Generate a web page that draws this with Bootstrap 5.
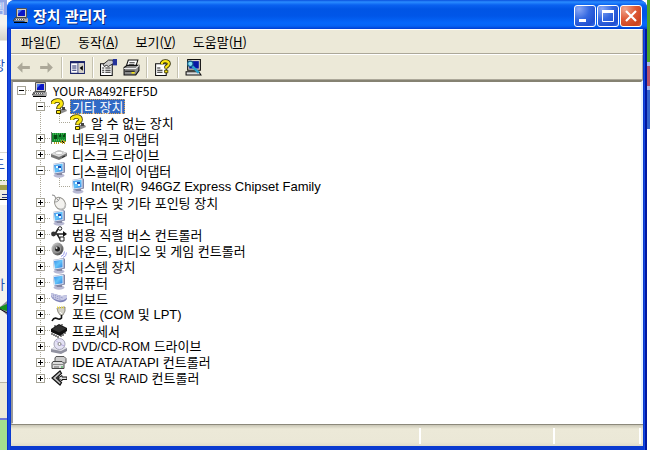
<!DOCTYPE html>
<html lang="ko">
<head>
<meta charset="utf-8">
<meta name="viewport" content="width=device-width, initial-scale=1">
<title>장치 관리자</title>
<link rel="stylesheet" href="https://cdn.jsdelivr.net/npm/bootstrap@5.3.0/dist/css/bootstrap.min.css">
<style>
  :root { --face: #ece9d8; --shade: #aca899; --dots: repeating-linear-gradient(#aca899 0 1px, transparent 1px 2px); --dots-x: repeating-linear-gradient(90deg, #aca899 0 1px, transparent 1px 2px); }
  body { font-family: "Noto Sans CJK KR", sans-serif; font-size: 13px; line-height: 16px; color: #000; background: #fff; }
  svg { display: block; flex: none; }
  .ico { width: 16px; height: 16px; }
  .latin { font-family: "Liberation Sans", sans-serif; font-size: 12px; }
  .model { font-family: "Liberation Sans", sans-serif; }
  .host { font-size: 12px; }

  .behind-left { width: 7px; background: linear-gradient(#8fa5e6 0 15px, #f4f3ee 15px 24px, #d5d3c9 40px, #fff 41px 152px, #d9d8d0 152px 153px, #fff 153px 205px, #f4f3ee 205px 382px, #b9b5a5 382px 383px, #ece9d8 383px 418px, #6d78d6 418px 420px, #a5e08e 420px 100%); color: #2150b4; }
  .peek { margin-left: -7px; height: 16px; width: 14px; }
  .peek-title { color: #dfe6fb; }
  .peek-a { margin-top: 41px; }
  .peek-b { margin-top: 83px; }
  .peek-c { margin-top: 76px; }
  .behind-right { width: 3px; background: linear-gradient(#4aa32a 0 62px, #a9b7ea 62px 66px, #b5526a 66px 86px, #a9b7ea 86px 90px, #3464cc 90px 129px, #fff 129px); }

  .frame { background: linear-gradient(90deg, #0831c9 0 1px, #1448e0 1px 3px, #0a3ad0 3px calc(100% - 3px), #1448e0 calc(100% - 3px) calc(100% - 2px), #0018a0 calc(100% - 2px)); padding: 0 4px 4px; border-radius: 8px 8px 0 0; }
  .titlebar { height: 29px; margin: 0 -4px; padding: 2px 5px 0 6px; border-radius: 8px 8px 0 0; background: linear-gradient(#0a50dd 0, #2a8cff 2px, #0a62f0 5px, #0055e5 9px, #0056e8 16px, #0567fb 23px, #0562f4 26px, #003dd0 29px); }
  .titlebar h1 { font-size: 15px; line-height: 20px; font-weight: 700; color: #fff; text-shadow: 1px 1px 0 #0a2a80; }
  .caps { gap: 1px; }
  .cap { width: 22px; height: 22px; border: 1px solid #fff; border-radius: 3px; padding: 0; background: radial-gradient(circle at 20% 15%, #8aa8f5, #3468e0 45%, #1f4fd0 80%, #3a70ec); }
  .cap-close { background: radial-gradient(circle at 20% 15%, #f0a58d, #df5a36 45%, #cc4320 80%, #d96040); }

  .client { background: var(--face); }
  .menubar { height: 25px; padding: 0 2px; gap: 1px; border-top: 1px solid #fff; border-bottom: 1px solid var(--shade); border-right: 1px solid var(--shade); }
  .menubar button { border: 0; background: none; padding: 0 8px; color: #000; }
  .toolbar { height: 26px; border-top: 1px solid #fff; border-bottom: 1px solid var(--shade); border-right: 1px solid var(--shade); padding-left: 1px; }
  .tool { border: 0; background: none; padding: 0; width: 23px; height: 22px; display: grid; place-items: center; }
  .tool svg { width: 17px; height: 17px; }
  .split { width: 2px; height: 21px; margin: 0 3px; background: linear-gradient(90deg, #c5c2b0 50%, #fff 50%); }
  .flip { transform: scaleX(-1); }

  .pane { border: solid; border-width: 2px 2px 1px 2px; border-color: #858272 #e4f2ff #fff #9a9a9a; background: #fff; padding: 0 0 0 4px; }
  .tree ul { list-style: none; margin: 0; padding: 0; }
  .tree > ul ul { margin-left: 19px; background: var(--dots) 4px 0 / 1px calc(100% - 8px) no-repeat; }
  .node { height: 16px; display: flex; align-items: center; white-space: pre; }
  .twist { width: 9px; height: 9px; padding: 0; border: 1px solid #a5a396; background: linear-gradient(#000, #000) center / 5px 1px no-repeat, #fff; flex: none; }
  .twist[aria-expanded="false"] { background: linear-gradient(#000, #000) center / 5px 1px no-repeat, linear-gradient(#000, #000) center / 1px 5px no-repeat, #fff; }
  .stem { width: 6px; height: 1px; background: var(--dots-x); }
  .stem-leaf { width: 11px; margin-left: 4px; }
  .label { margin-left: 3px; padding: 0 2px; line-height: 15px; }
  .label.chosen { background: #316ac5; color: #fff; outline: 1px dotted #e0a050; outline-offset: -1px; }

  .statusbar { height: 22px; border-top: 1px solid #8c897b; background: linear-gradient(#c9c6b6 0, #ece9d8 4px, #ebe8d7 17px, #dfdccb); padding: 3px 2px 2px; }
  .cell { border-right: 2px solid; border-image: linear-gradient(90deg, #bcb9a8 50%, #fff 50%) 2; }
  .cell-a { flex: 411; } .cell-b { flex: 133; } .cell-c { flex: 85; }
</style>
<script src="https://cdn.jsdelivr.net/npm/bootstrap@5.3.0/dist/js/bootstrap.bundle.min.js"></script>
</head>
<body class="d-flex vh-100 overflow-hidden m-0">

<svg width="0" height="0" class="position-absolute" aria-hidden="true">
  <defs>
    <linearGradient id="gScreen" x2="1" y2="1"><stop stop-color="#3a8ee8"/><stop offset=".5" stop-color="#63c4fa"/><stop offset="1" stop-color="#2b7fe0"/></linearGradient>
    <linearGradient id="gBall" x2="1" y2="1"><stop stop-color="#ddd"/><stop offset="1" stop-color="#333"/></linearGradient>
  </defs>
  <symbol id="pc" viewBox="0 0 16 16">
    <path d="M3.500.5h10v9h-10z" fill="#d4d0c8" stroke="#555"/><path d="M5 2h7v6H5z" fill="#0a16c8"/><path d="M5 2h4L5 6z" fill="#4a78f0"/>
    <path d="M2 10h11l-1 3H.5z" fill="#eee" stroke="#333"/><path d="M2 11.500h9" stroke="#555" stroke-dasharray="1 1"/>
    <path d="M11 11l4-1v4l-3 1z" fill="#aaa"/><path d="M1 14.500h13" stroke="#000"/>
  </symbol>
  <symbol id="unknown" viewBox="0 0 16 16">
    <path d="M9 11h6l1 2-7 3-2-2z" fill="#8c8c8c"/><path d="M11 9h3v3h-3z" fill="#444"/>
    <path d="M2 6V4.500Q3.500 2.500 6.500 2.500q4 0 4 3.200 0 1.500-1.500 2.300T7.500 11" fill="none" stroke="#3a3500" stroke-width="4.600"/>
    <path d="M2 6V4.500Q3.500 2.500 6.500 2.500q4 0 4 3.200 0 1.500-1.500 2.300T7.500 10.500" fill="none" stroke="#fbe612" stroke-width="3"/>
    <path d="M5.500 12.500h4v3h-4z" fill="#fbe612" stroke="#3a3500"/>
  </symbol>
  <symbol id="net" viewBox="0 0 16 16">
    <path d="M0 3h15v9H0z" fill="#158a30"/><path d="M.5 2v12" stroke="#777"/><path d="M3 5h3v4H3zM8 4h2v3H8zM12 4h2v3h-2z" fill="#064a12"/><path d="M2 4h12M3 10h11" stroke="#6bdc72" stroke-dasharray="1 1"/><path d="M3 13h6M10 11h4v2h-4z" stroke="#b69d22" stroke-width="2" stroke-dasharray="1 1"/>
  </symbol>
  <symbol id="disk" viewBox="0 0 16 16">
    <path d="M0 8l8-4 8 3v3l-8 4-8-3z" fill="#777"/><path d="M0 8l8-4 8 3-8 4z" fill="#dcdcdc"/><ellipse cx="8" cy="7" rx="4" ry="1.600" fill="#fff" stroke="#aaa" stroke-width=".6"/><path d="M11 11.500l3-1.500" stroke="#222"/>
  </symbol>
  <symbol id="display" viewBox="0 0 16 16">
    <ellipse cx="8" cy="13.500" rx="5.500" ry="2.200" fill="#b7b8d2"/><path d="M6 10h5v3H6z" fill="#85879f"/>
    <path d="M2 2l10.500-2L14 1v9.500L6 12.500l-3-1z" fill="#8187a8"/><path d="M2 2l10.500-1.500v9.500L3 11.500z" fill="#dfe7f5"/><path d="M3 3l8.500-1.300V9.300L4 10.500z" fill="url(#gScreen)"/>
  </symbol>
  <symbol id="adapter" viewBox="0 0 16 16">
    <use href="#display"/><path d="M5 4h2v2H5zM8 6h2v2H8z" fill="#e8fbff"/><path d="M7 4h3v2H7z" fill="#1b4cb4"/>
  </symbol>
  <symbol id="mouse" viewBox="0 0 16 16">
    <path d="M1 1q3-1 4 4" fill="none" stroke="#888"/><ellipse cx="9" cy="9.500" rx="5" ry="6.500" transform="rotate(-32 9 9.500)" fill="#f3f2ef" stroke="#97958f"/><path d="M4 8q4 0 5-5M6 5l2 2" fill="none" stroke="#999"/><path d="M8 15q7 1 6.500-5" fill="none" stroke="#bbb" stroke-width="1.500"/>
  </symbol>
  <symbol id="usb" viewBox="0 0 16 16">
    <path d="M1 8h12M4 8l3-5h3M6 8l3 5h2" fill="none" stroke="#222" stroke-width="1.600"/><circle cx="2.500" cy="8" r="2.400" fill="#333"/><path d="M12 5l4 3-4 3z" fill="#111"/><circle cx="9" cy="2.500" r="1.800" fill="#fff" stroke="#222"/><path d="M9 11h4v4H9z" fill="#fff" stroke="#222"/>
  </symbol>
  <symbol id="sound" viewBox="0 0 16 16">
    <ellipse cx="6.500" cy="7" rx="6" ry="6.500" fill="url(#gBall)"/><circle cx="6" cy="7" r="4" fill="#999"/><circle cx="6.500" cy="7" r="2.500" fill="#222"/><circle cx="5.500" cy="6" r="1" fill="#ddd"/><path d="M10 14.500q3.500-1 3.500-5M12 15.500q3.500-1 3.500-5" fill="none" stroke="#9da0ee"/>
  </symbol>
  <symbol id="keyboard" viewBox="0 0 16 16">
    <path d="M0 3l11 3 5-1v4q-3 4-8 3Q1 10 0 6z" fill="#7f83b8"/><path d="M0 3l10 3 6-1v3q-4 3-8 2.500Q1 9 0 5z" fill="#c8cae6"/><path d="M2 5l10 3M2 7l8 2.500" stroke="#8a8ec0" stroke-dasharray="1 1"/>
  </symbol>
  <symbol id="port" viewBox="0 0 16 16">
    <path d="M6 2l8-1v4l-2 4H9L7 6z" fill="#d2d0c6" stroke="#77756b" stroke-width=".8"/><path d="M6 1.500h8" stroke="#eedc4a" stroke-width="2" stroke-dasharray="1 1"/><path d="M10.500 9v3Q9 14 6 12.500T1 15" fill="none" stroke="#111" stroke-width="1.600"/><path d="M9 6l2 2" stroke="#fff"/>
  </symbol>
  <symbol id="cpu" viewBox="0 0 16 16">
    <path d="M0 7l8-5 8 4v3l-7 5-9-4z" fill="#111"/><path d="M1 7l7-4 7 3.500-7 4z" fill="#303030"/><path d="M1 11v2M3 12v2M5 13v2M7 14v2M10 13v2M12 12v2M14 10v2M4 5V3M11 3.500V2" stroke="#111"/>
  </symbol>
  <symbol id="dvd" viewBox="0 0 16 16">
    <path d="M0 11l5-3 11 2v3l-6 3-10-2z" fill="#9192a0"/><path d="M0 11l5-3 11 2-6 3z" fill="#e4e4ec"/><circle cx="8.500" cy="6" r="5.500" fill="#e4e2f5" stroke="#a6a6b8"/><path d="M8.500 6L5 2.500M8.500 6l5 2" stroke="#b7abdf"/><circle cx="8.500" cy="6" r="1.500" fill="#fff" stroke="#888"/>
  </symbol>
  <symbol id="ide" viewBox="0 0 16 16">
    <path d="M5 2.500h8l2 2V9H4V4z" fill="#ccc" stroke="#555"/><path d="M2 7.500h9l2 2v5H1V9z" fill="#dcdcdc" stroke="#444"/><path d="M2 10.500h10" stroke="#888"/><path d="M3 13h5" stroke="#666"/><path d="M10 13h2" stroke="#1da32e"/>
  </symbol>
  <symbol id="scsi" viewBox="0 0 16 16">
    <path d="M9 1L1 8l8 7 1.500-2.500L5.500 8l5-4.500z" fill="#bbb" stroke="#111" stroke-width="1.200"/><path d="M7 8l4-2.500V7h5v2.500h-5V11z" fill="#ddd" stroke="#111"/>
  </symbol>
  <symbol id="arrow" viewBox="0 0 16 16"><path d="M2 8l5-5v3.500h7v3H7V13z" fill="#aca899"/></symbol>
  <symbol id="panel" viewBox="0 0 16 16">
    <path d="M1.500 2.500h13v11h-13z" fill="#fff" stroke="#1a2368"/><path d="M1 3h14" stroke="#1a2368" stroke-width="2"/><path d="M8.500 4v10" stroke="#1a2368"/><path d="M3 6.500h4M3 8.500h4M3 10.500h4" stroke="#1a2368"/><path d="M9 4h5v9H9z" fill="#d4d0c8"/><path d="M13 6v5l-3-2.500z" fill="#000"/>
  </symbol>
  <symbol id="props" viewBox="0 0 16 16">
    <path d="M.5 4.500h11v11H.5z" fill="#fff" stroke="#111"/><path d="M2 8.500h2M5 8.500h5M2 10.500h2M5 10.500h5M2 12.500h2M5 12.500h5" stroke="#222"/><path d="M3 5l5-4h4l1 3-5 3-2-1-2 1z" fill="#ccc" stroke="#111" stroke-width=".8"/><path d="M12 0h4v6h-4z" fill="#25339a"/>
  </symbol>
  <symbol id="printer" viewBox="0 0 16 16">
    <path d="M5 1h9l-2 6H3z" fill="#fff" stroke="#111"/><path d="M6 3.500h5M5.500 5.500h5" stroke="#333"/><path d="M1 8l3-2h11v5l-3 4H1z" fill="#8b8b8b" stroke="#111"/><path d="M1 9h11l3-3" fill="none" stroke="#eee"/><path d="M2 11.500h9" stroke="#111"/><path d="M8 13h3" stroke="#f4e413" stroke-width="1.500"/>
  </symbol>
  <symbol id="help" viewBox="0 0 16 16">
    <path d="M1.500 4.500h10v11h-10z" fill="#fff" stroke="#111"/><path d="M3 8.500h3M3 10.500h5M3 12.500h5" stroke="#222"/><path d="M7.500 5V3.500q1-1.500 3-1.500 3.500 0 3.500 2.500Q14 6 11.500 7.500V9" fill="none" stroke="#332f00" stroke-width="3.600"/><path d="M7.500 5V3.500q1-1.500 3-1.500 3.500 0 3.500 2.500Q14 6 11.500 7.500V9" fill="none" stroke="#fbe612" stroke-width="2"/><path d="M10 10.500h3v2.500h-3z" fill="#fbe612" stroke="#332f00" stroke-width=".8"/>
  </symbol>
  <symbol id="scan" viewBox="0 0 16 16">
    <path d="M2.500.5h12v10h-12z" fill="#d4d0c8" stroke="#111"/><path d="M4 2h9v7H4z" fill="#0716a5"/><path d="M1 12h12l2 3H1z" fill="#ddd" stroke="#111"/><circle cx="5" cy="4.500" r="2.500" fill="#86dff5" stroke="#16608a"/><path d="M7 7l6 6" stroke="#2b9fc9" stroke-width="2.400"/>
  </symbol>
</svg>

<aside class="behind-left flex-shrink-0 overflow-hidden" aria-hidden="true">
  <div class="peek peek-title">템</div>
  <div class="peek peek-a">장</div>
  <div class="peek peek-b">드</div>
  <svg width="7" height="20" viewBox="0 0 7 20" class="mt-2"><path d="M0 0h7v20H0z" fill="#eeeade"/><path d="M0 .5h7" stroke="#6f9a54" stroke-dasharray="2 1"/><path d="M0 5h7v5H0z" fill="#a2a04a"/><path d="M2 14.500h5M2 17.500h5" stroke="#22327a"/><path d="M0 20h7" stroke="#000" stroke-width="2"/></svg>
  <div class="peek peek-c">가</div>
  <svg width="7" height="18" viewBox="0 0 7 18" class="mt-2"><path d="M0 7l7-6v14L0 9z" fill="#8c8c9a"/><path d="M0 7l7-3v7L0 9z" fill="#15901f"/><path d="M0 9l7 4" stroke="#111"/></svg>
</aside>

<main class="frame flex-grow-1 d-flex flex-column">
  <header class="titlebar d-flex align-items-center">
    <svg class="ico me-1"><use href="#pc"/></svg>
    <h1 class="m-0 flex-grow-1">장치 관리자</h1>
    <div class="caps d-flex">
      <button class="cap" aria-label="최소화"><svg width="20" height="20"><path d="M4 13h7v3H4z" fill="#fff"/></svg></button>
      <button class="cap" aria-label="최대화"><svg width="20" height="20"><path d="M4.500 5v10.500h11V5" fill="none" stroke="#fff"/><path d="M4 5.500h12" stroke="#fff" stroke-width="3"/></svg></button>
      <button class="cap cap-close" aria-label="닫기"><svg width="20" height="20"><path d="M5 5l10 10M15 5L5 15" stroke="#fff" stroke-width="2.200"/></svg></button>
    </div>
  </header>

  <div class="client flex-grow-1 d-flex flex-column">
    <nav class="menubar d-flex align-items-center" aria-label="메뉴">
      <button>파일(<u>F</u>)</button><button>동작(<u>A</u>)</button><button>보기(<u>V</u>)</button><button>도움말(<u>H</u>)</button>
    </nav>
    <div class="toolbar d-flex align-items-center" role="toolbar" aria-label="도구">
      <button class="tool" disabled aria-label="뒤로"><svg><use href="#arrow"/></svg></button>
      <button class="tool" disabled aria-label="앞으로"><svg class="flip"><use href="#arrow"/></svg></button>
      <span class="split"></span>
      <button class="tool" aria-label="콘솔 트리"><svg><use href="#panel"/></svg></button>
      <span class="split"></span>
      <button class="tool" aria-label="속성"><svg><use href="#props"/></svg></button>
      <button class="tool" aria-label="인쇄"><svg><use href="#printer"/></svg></button>
      <span class="split"></span>
      <button class="tool" aria-label="도움말"><svg><use href="#help"/></svg></button>
      <span class="split"></span>
      <button class="tool" aria-label="하드웨어 변경 사항 검색"><svg><use href="#scan"/></svg></button>
    </div>

    <section class="pane tree flex-grow-1">
      <ul>
        <li><div class="node"><button class="twist" aria-expanded="true" aria-label="접기"></button><span class="stem"></span><svg class="ico"><use href="#pc"/></svg><span class="label host">YOUR-A8492FEF5D</span></div>
          <ul>
            <li><div class="node"><button class="twist" aria-expanded="true" aria-label="접기"></button><span class="stem"></span><svg class="ico"><use href="#unknown"/></svg><span class="label chosen">기타 장치</span></div>
              <ul><li class="node"><span class="stem stem-leaf"></span><svg class="ico"><use href="#unknown"/></svg><span class="label">알 수 없는 장치</span></li></ul></li>
            <li class="node"><button class="twist" aria-expanded="false" aria-label="펼치기"></button><span class="stem"></span><svg class="ico"><use href="#net"/></svg><span class="label">네트워크 어댑터</span></li>
            <li class="node"><button class="twist" aria-expanded="false" aria-label="펼치기"></button><span class="stem"></span><svg class="ico"><use href="#disk"/></svg><span class="label">디스크 드라이브</span></li>
            <li><div class="node"><button class="twist" aria-expanded="true" aria-label="접기"></button><span class="stem"></span><svg class="ico"><use href="#adapter"/></svg><span class="label">디스플레이 어댑터</span></div>
              <ul><li class="node"><span class="stem stem-leaf"></span><svg class="ico"><use href="#adapter"/></svg><span class="label model">Intel(R)  946GZ Express Chipset Family</span></li></ul></li>
            <li class="node"><button class="twist" aria-expanded="false" aria-label="펼치기"></button><span class="stem"></span><svg class="ico"><use href="#mouse"/></svg><span class="label">마우스 및 기타 포인팅 장치</span></li>
            <li class="node"><button class="twist" aria-expanded="false" aria-label="펼치기"></button><span class="stem"></span><svg class="ico"><use href="#adapter"/></svg><span class="label">모니터</span></li>
            <li class="node"><button class="twist" aria-expanded="false" aria-label="펼치기"></button><span class="stem"></span><svg class="ico"><use href="#usb"/></svg><span class="label">범용 직렬 버스 컨트롤러</span></li>
            <li class="node"><button class="twist" aria-expanded="false" aria-label="펼치기"></button><span class="stem"></span><svg class="ico"><use href="#sound"/></svg><span class="label">사운드, 비디오 및 게임 컨트롤러</span></li>
            <li class="node"><button class="twist" aria-expanded="false" aria-label="펼치기"></button><span class="stem"></span><svg class="ico"><use href="#display"/></svg><span class="label">시스템 장치</span></li>
            <li class="node"><button class="twist" aria-expanded="false" aria-label="펼치기"></button><span class="stem"></span><svg class="ico"><use href="#display"/></svg><span class="label">컴퓨터</span></li>
            <li class="node"><button class="twist" aria-expanded="false" aria-label="펼치기"></button><span class="stem"></span><svg class="ico"><use href="#keyboard"/></svg><span class="label">키보드</span></li>
            <li class="node"><button class="twist" aria-expanded="false" aria-label="펼치기"></button><span class="stem"></span><svg class="ico"><use href="#port"/></svg><span class="label">포트 <span class="model">(COM </span>및 <span class="model">LPT)</span></span></li>
            <li class="node"><button class="twist" aria-expanded="false" aria-label="펼치기"></button><span class="stem"></span><svg class="ico"><use href="#cpu"/></svg><span class="label">프로세서</span></li>
            <li class="node"><button class="twist" aria-expanded="false" aria-label="펼치기"></button><span class="stem"></span><svg class="ico"><use href="#dvd"/></svg><span class="label"><span class="latin">DVD/CD-ROM</span> 드라이브</span></li>
            <li class="node"><button class="twist" aria-expanded="false" aria-label="펼치기"></button><span class="stem"></span><svg class="ico"><use href="#ide"/></svg><span class="label"><span class="model">IDE ATA/ATAPI</span> 컨트롤러</span></li>
            <li class="node"><button class="twist" aria-expanded="false" aria-label="펼치기"></button><span class="stem"></span><svg class="ico"><use href="#scsi"/></svg><span class="label"><span class="latin">SCSI</span> 및 <span class="latin">RAID</span> 컨트롤러</span></li>
          </ul>
        </li>
      </ul>
    </section>

    <footer class="statusbar d-flex"><div class="cell cell-a"></div><div class="cell cell-b"></div><div class="cell cell-c"></div></footer>
  </div>
</main>

<aside class="behind-right flex-shrink-0" aria-hidden="true"></aside>
</body>
</html>
